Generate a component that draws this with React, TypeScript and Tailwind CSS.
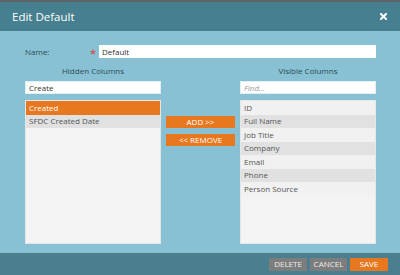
const hidden = ["Created", "SFDC Created Date"];
const visible = ["ID", "Full Name", "Job Title", "Company", "Email", "Phone", "Person Source"];

function ColumnList({ items, selected }: { items: string[]; selected?: string }) {
  return (
    <div className="mt-[6px] h-[144px] bg-[#f4f4f4] border border-[#e6e6e6] overflow-hidden">
      {items.map((item, i) => (
        <div
          key={item}
          className={
            item === selected
              ? "h-[13.5px] flex items-center px-[3px] bg-[#e8781f] text-white"
              : i % 2 === 1
              ? "h-[13.5px] flex items-center px-[3px] bg-[#e1e1e1] text-[#555]"
              : "h-[13.5px] flex items-center px-[3px] bg-[#f1f1f1] text-[#555]"
          }
        >
          {item}
        </div>
      ))}
    </div>
  );
}

export default function App() {
  return (
    <div
      className="w-[400px] h-[275px] flex flex-col text-[8px] leading-none"
      style={{ fontFamily: '"Open Sans", "Liberation Sans", sans-serif' }}
    >
      <div className="h-[2px] bg-[#5c6468]" />
      <div className="h-[29px] bg-[#467f8f] flex items-center justify-between pl-[12px] pr-[12px]">
        <span className="text-white text-[11.5px]">Edit Default</span>
        <svg width="7" height="7" viewBox="0 0 7 7" className="mr-[1px]">
          <path d="M1 1 L6 6 M6 1 L1 6" stroke="white" strokeWidth="2" strokeLinecap="square" />
        </svg>
      </div>

      <div className="flex-1 bg-[#87c1d3] pl-[25px] pr-[24px] pt-[14px]">
        <div className="h-[13px] flex items-center">
          <span className="w-[64px] text-[#2e4a55]">Name:</span>
          <span className="text-[#c0666b] text-[9px] w-[9px]">★</span>
          <div className="ml-auto w-[277px] h-[13px] bg-white flex items-center px-[3px] text-[#333]">
            Default
          </div>
        </div>

        <div className="flex">
          <div className="w-[136px] flex flex-col">
            <div className="mt-[8px] h-[10px] flex items-center justify-center text-[#2e4a55]">
              Hidden Columns
            </div>
            <div className="mt-[5px] h-[13px] bg-white border border-[#e3eef2] flex items-center px-[3px] text-[#333]">
              Create
            </div>
            <ColumnList items={hidden} selected="Created" />
          </div>

          <div className="w-[79px] pl-[5px] pr-[5px] pt-[58px] flex flex-col gap-[6px]">
            <div className="h-[12px] bg-[#e8781f] text-white flex items-center justify-center">ADD &gt;&gt;</div>
            <div className="h-[12px] bg-[#e8781f] text-white flex items-center justify-center">&lt;&lt; REMOVE</div>
          </div>

          <div className="w-[136px] flex flex-col">
            <div className="mt-[8px] h-[10px] flex items-center justify-center text-[#2e4a55]">
              Visible Columns
            </div>
            <div className="mt-[5px] h-[13px] bg-white border border-[#e3eef2] flex items-center px-[3px] text-[#999] italic">
              Find...
            </div>
            <ColumnList items={visible} />
          </div>
        </div>
      </div>

      <div className="h-[22px] bg-[#497f8f] flex items-center justify-end gap-[3px] pr-[12px]">
        <div className="w-[38px] h-[13px] bg-[#7d7d7d] text-[#eee] flex items-center justify-center">DELETE</div>
        <div className="w-[37px] h-[13px] bg-[#7d7d7d] text-[#eee] flex items-center justify-center">CANCEL</div>
        <div className="w-[38px] h-[13px] bg-[#e8781f] text-white flex items-center justify-center">SAVE</div>
      </div>
    </div>
  );
}
